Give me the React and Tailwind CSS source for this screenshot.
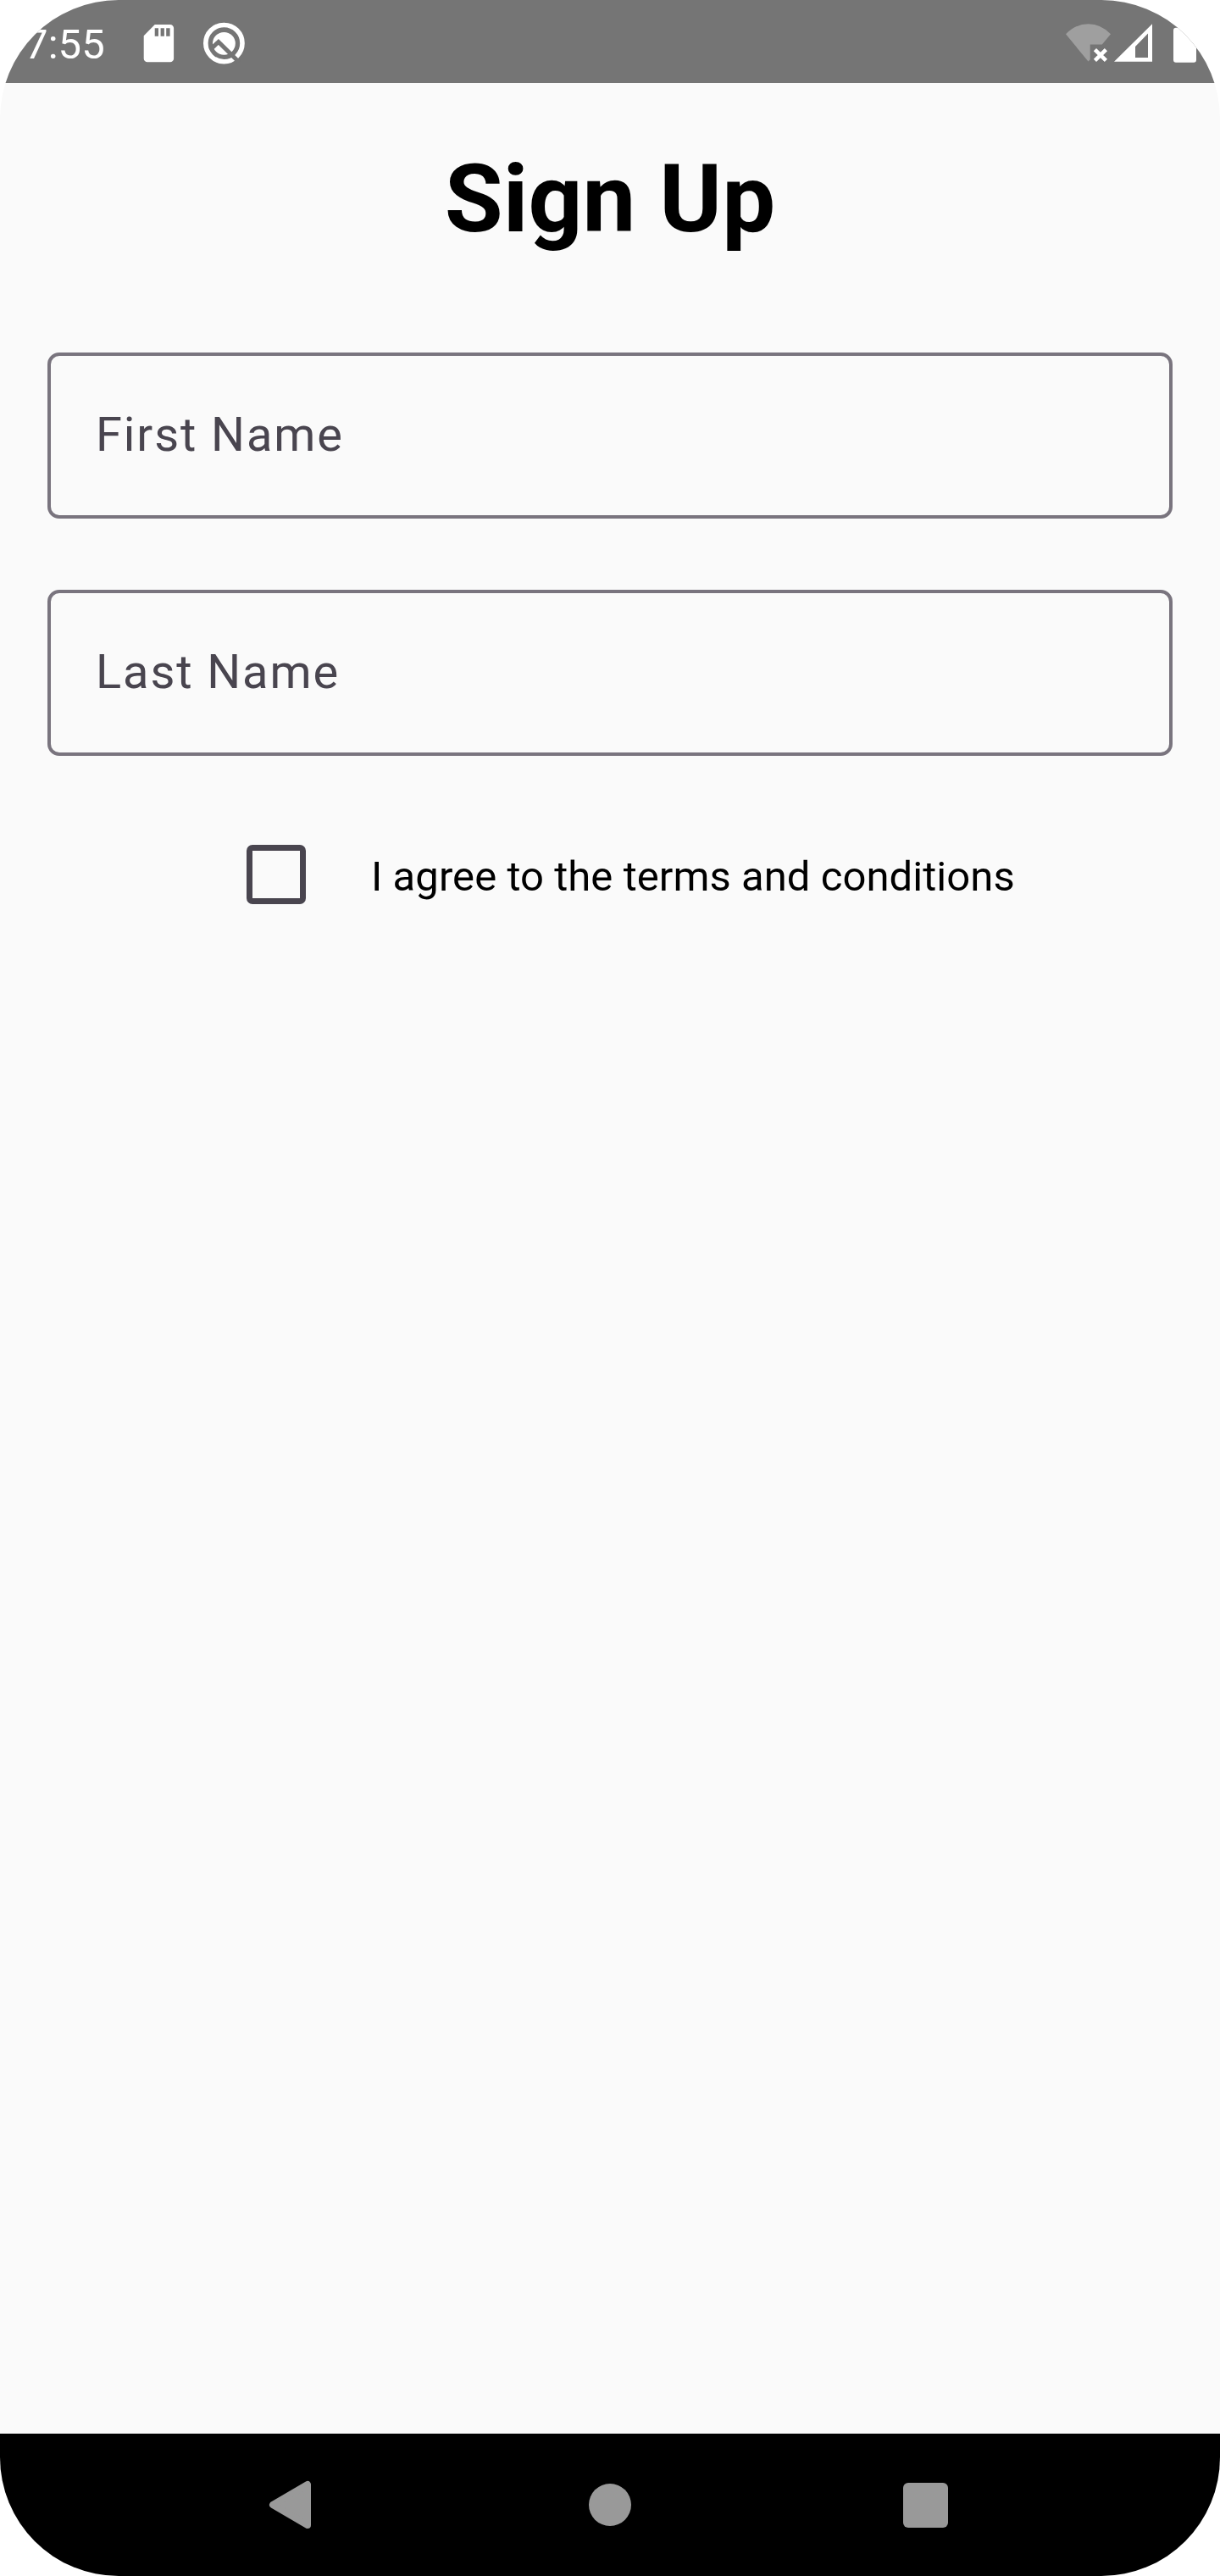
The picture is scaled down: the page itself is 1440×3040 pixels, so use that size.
function SdCardIcon() {
  return (
    <svg className="ml-[45px] h-[98px] w-[37px] shrink-0" viewBox="169 0 37 98">
      <path
        fill="#fff"
        fillRule="evenodd"
        d="M182.7 29H200.8a4.3 4.3 0 0 1 4.3 4.3V69a4.3 4.3 0 0 1-4.3 4.3H174a4.3 4.3 0 0 1-4.3-4.3V42.3ZM182.7 33.2V42.8H187V33.2ZM189.6 33.2V42.8H193.9V33.2ZM196.2 33.2V42.8H200.6V33.2Z"
      />
    </svg>
  );
}

function SearchBadgeIcon() {
  return (
    <svg className="ml-[33px] h-[98px] w-[52px] shrink-0" viewBox="239 0 52 98">
      <circle cx="264.4" cy="51.1" r="21.6" fill="none" stroke="#fff" strokeWidth="5.6" />
      <circle cx="264.4" cy="51.3" r="13.4" fill="#fff" />
      <path d="M248 58.6 257.9 49.5 282 73.2" fill="none" stroke="#757575" strokeWidth="5" />
    </svg>
  );
}

function ConnectivityIcons() {
  return (
    <svg className="h-[98px] w-[182px] shrink-0" viewBox="1258 0 182 98">
      <path
        fill="#9f9f9f"
        d="M1258 40.3Q1269.5 28.3 1284.5 28.3T1311 40.3L1300.8 52.5H1286.7V70.3L1284.5 72.5Z"
      />
      <path d="M1292.4 58.6 1305.4 71.4M1305.4 58.6 1292.4 71.4" stroke="#fff" strokeWidth="4.6" />
      <path
        fill="#fff"
        fillRule="evenodd"
        d="M1315 72.8 1360 28.3V72.8ZM1340 55V68H1355V39.6Z"
      />
      <rect x="1385" y="32.7" width="27" height="41" rx="3" fill="#fff" />
    </svg>
  );
}

function StatusBar() {
  return (
    <header className="flex h-[98px] items-center justify-between bg-[#757575]">
      <div className="flex items-center pl-[29px]">
        <span className="w-[95px] pt-[8px] text-[49px] leading-[60px] tracking-[0.1px] text-white">7:55</span>
        <SdCardIcon />
        <SearchBadgeIcon />
      </div>
      <ConnectivityIcons />
    </header>
  );
}

function Field({ label }) {
  return (
    <label className="flex h-[196px] items-center rounded-[14px] border-4 border-[#79747e] px-[53px] text-[56px] tracking-[1.9px] text-[#49454f]">
      <span className="pb-[2px] leading-[84px]">{label}</span>
    </label>
  );
}

function NavBar() {
  return (
    <nav className="flex h-[168px] items-center bg-black pl-[317px]">
      <svg className="h-[58px] w-[51px]" viewBox="317 2927 51 58">
        <path
          d="M322 2956 363 2932V2980Z"
          fill="#999"
          stroke="#999"
          strokeWidth="8"
          strokeLinejoin="round"
        />
      </svg>
      <span className="ml-[327px] size-[50px] rounded-full bg-[#999]" />
      <span className="ml-[321px] size-[53px] rounded-[6px] bg-[#999]" />
    </nav>
  );
}

export default function App() {
  return (
    <div className="h-[3040px] w-[1440px] bg-white">
      <div className="flex h-full flex-col overflow-hidden rounded-[140px] bg-[#fafafa] font-[Roboto,sans-serif]">
        <StatusBar />
        <main className="flex flex-1 flex-col px-14 pt-[67px]">
          <h1 className="text-center text-[112px] leading-[140px] font-bold tracking-[0.1px] text-black">
            Sign Up
          </h1>
          <form className="mt-[111px] flex flex-col gap-[84px]">
            <Field label="First Name" />
            <Field label="Last Name" />
            <label className="mt-[21px] ml-[235px] flex h-[70px] items-center">
              <span className="size-[70px] rounded-[7px] border-[7px] border-[#49454f]" />
              <span className="pt-[5px] pl-[77px] text-[49px] leading-[60px] tracking-[0.06px] text-black">
                I agree to the terms and conditions
              </span>
            </label>
          </form>
        </main>
        <NavBar />
      </div>
    </div>
  );
}
